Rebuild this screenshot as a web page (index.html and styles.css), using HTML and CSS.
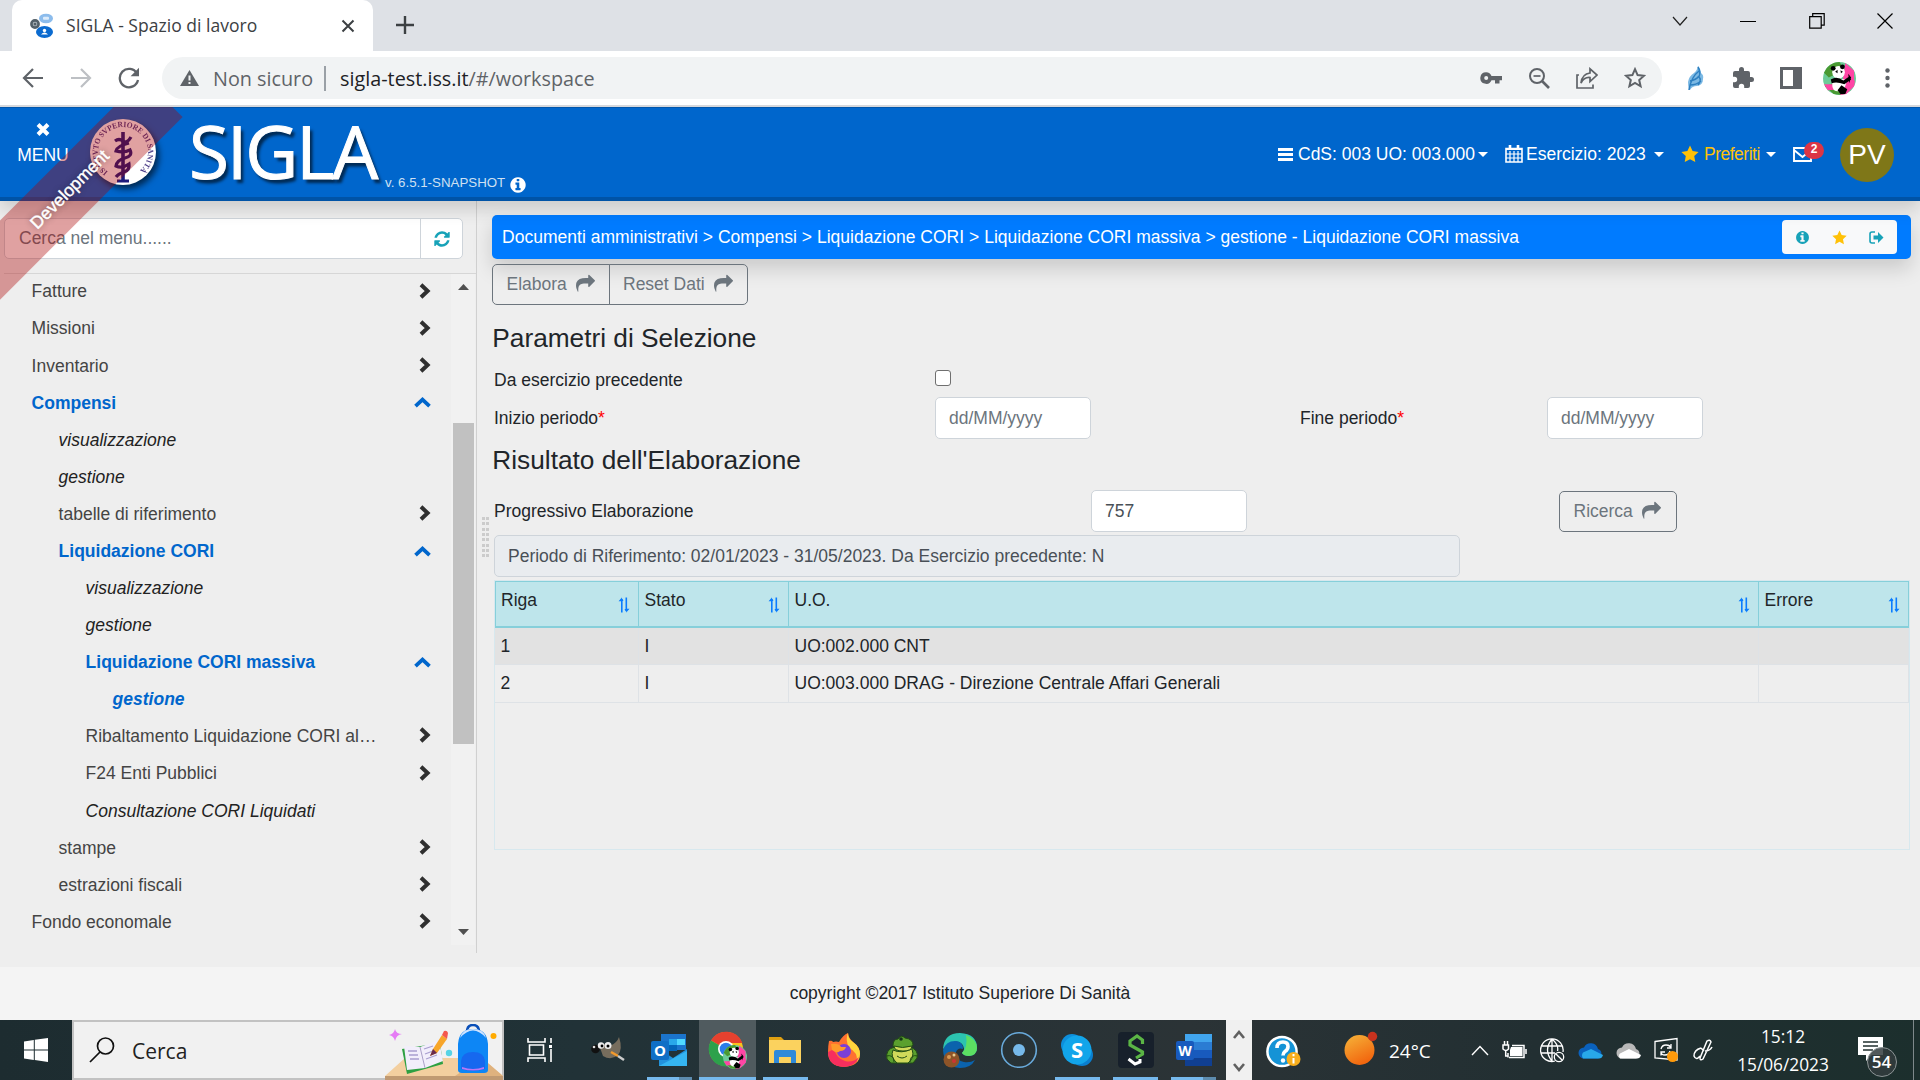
FILE: index.html
```html
<!DOCTYPE html>
<html lang="it">
<head>
<meta charset="utf-8">
<title>SIGLA - Spazio di lavoro</title>
<link rel="stylesheet" href="styles.css">
</head>
<body>
<svg width="0" height="0" class="sprite">
  <symbol id="share" viewBox="0 0 1792 1792"><path fill="currentColor" d="M1792 640q0 26-19 45l-512 512q-19 19-45 19t-45-19-19-45v-256h-224q-98 0-175.5 6t-154 21.5-133 42.5-105.5 69.5-80 101-48.5 138.5-17.5 181q0 55 5 123 0 6 2.5 23.5t2.5 26.5q0 15-8.5 25t-23.5 10q-16 0-28-17-7-9-13-22t-13.5-30-10.5-24q-127-285-127-451 0-199 53-333 162-403 875-403h224v-256q0-26 19-45t45-19 45 19l512 512q19 19 19 45z"/></symbol>
  <symbol id="info" viewBox="0 0 1792 1792"><path fill="currentColor" d="M1152 1376v-160q0-14-9-23t-23-9h-96v-512q0-14-9-23t-23-9h-320q-14 0-23 9t-9 23v160q0 14 9 23t23 9h96v320h-96q-14 0-23 9t-9 23v160q0 14 9 23t23 9h448q14 0 23-9t9-23zm-128-896v-160q0-14-9-23t-23-9h-192q-14 0-23 9t-9 23v160q0 14 9 23t23 9h192q14 0 23-9t9-23zm640 416q0 209-103 385.5t-279.5 279.5-385.5 103-385.5-103-279.5-279.5-103-385.5 103-385.5 279.5-279.5 385.5-103 385.5 103 279.5 279.5 103 385.5z"/></symbol>
  <symbol id="refresh" viewBox="0 0 1792 1792"><path fill="currentColor" d="M1639 1056q0 5-1 7-64 268-268 434.5t-478 166.5q-146 0-282.5-55t-243.5-157l-129 129q-19 19-45 19t-45-19-19-45v-448q0-26 19-45t45-19h448q26 0 45 19t19 45-19 45l-137 137q71 66 161 102t187 36q134 0 250-65t186-179q11-17 53-117 8-23 30-23h192q13 0 22.5 9.5t9.5 22.5zm25-800v448q0 26-19 45t-45 19h-448q-26 0-45-19t-19-45 19-45l138-138q-148-137-349-137-134 0-250 65t-186 179q-11 17-53 117-8 23-30 23h-199q-13 0-22.5-9.5t-9.5-22.5v-7q65-268 270-434.5t480-166.5q146 0 284 55.5t245 156.5l130-129q19-19 45-19t45 19 19 45z"/></symbol>
  <symbol id="star" viewBox="0 0 18 18"><path fill="currentColor" d="M9 .6l2.6 5.5 6 .8-4.4 4.2 1.1 6L9 14.200l-5.300 2.900 1.100-6L.4 6.900l6-.8z"/></symbol>
  <symbol id="right" viewBox="0 0 12 16"><path d="M2 1.800L8.600 8 2 14.200" fill="none" stroke="currentColor" stroke-width="4"/></symbol>
  <symbol id="up" viewBox="0 0 17 11"><path d="M1.500 9.200L8.500 2.700l7 6.500" fill="none" stroke="currentColor" stroke-width="3.800"/></symbol>
  <symbol id="sort" viewBox="0 0 12 16"><path d="M3.800 15.500V2M8.300 .5V14" fill="none" stroke="currentColor" stroke-width="1.600"/><path d="M.6 4.200L3.800.6v3.600zM11.500 11.800l-3.200 3.600v-3.600z" fill="currentColor"/><path d="M3.500 .5l2 3.500H3.500zM8.500 15.500l-2-3.500h2z" fill="currentColor"/></symbol>
  <symbol id="panda" viewBox="0 0 34 34"><circle cx="17" cy="17" r="17" fill="#6ccb98"/><path d="M17 0a17 17 0 0 0-16 11l5 5 16-8zM2 25l9-3 8 12-8-1z" fill="#4a9a32"/><path d="M23 1l9 8v16l-8 8-6 1z" fill="#ff45a5"/><path d="M1 23l9 0 7 5-12 1zM25 21l8-2-1 6-7 3z" fill="#ff45a5"/><path d="M10 17q-2 11 3 13l8 1 4-13z" fill="#fff"/><circle cx="16" cy="10.500" r="6.500" fill="#fff"/><circle cx="10.500" cy="6.500" r="2.500"/><circle cx="20" cy="5" r="2.500"/><path d="M12.500 10l2.500-2v3.500zM18 8.500l2.500 1.500-2 1.500z"/><path d="M8 18q6-4 13 1l6-4 2 3-7 5q-8-3-13-1zM15 29l4-5 6 4-2 5-5 0zM26 12l3 4-2 6z"/></symbol>
</svg>

<div class="tabstrip">
  <div class="tab">
    <svg width="26" height="26" viewBox="0 0 26 26"><ellipse cx="17" cy="5.500" rx="7" ry="4.800" fill="#8cbcec"/><rect x="14" y="3.800" width="6" height="3" rx="1" fill="#dcebfa"/><circle cx="6" cy="11" r="3.600" fill="#b9c0c5" stroke="#536069" stroke-width="2.600"/><circle cx="6" cy="11" r="1.500" fill="#536069"/><ellipse cx="15.500" cy="19" rx="8.500" ry="6" fill="#0b6bd0"/><circle cx="15.500" cy="17.500" r="1.700" fill="#fff"/><path d="M12 21.500q3.500-4 7 0z" fill="#fff"/></svg>
    <span class="tab-title">SIGLA - Spazio di lavoro</span>
    <svg class="tab-close" width="14" height="14" viewBox="0 0 14 14"><path d="M1.500 1.500l11 11M12.500 1.500l-11 11" stroke="#3c4043" stroke-width="2"/></svg>
  </div>
  <svg class="tab-new" width="18" height="18" viewBox="0 0 18 18"><path d="M9 0v18M0 9h18" stroke="#3c4043" stroke-width="2.400"/></svg>
  <div class="window-controls">
    <svg width="16" height="16" viewBox="0 0 16 16"><path d="M1 4l7 8 7-8" fill="none" stroke="#222" stroke-width="1.200"/></svg>
    <svg width="16" height="16" viewBox="0 0 16 16"><path d="M0 8.500h16" stroke="#000"/></svg>
    <svg width="16" height="16" viewBox="0 0 16 16"><path d="M.7 3.700h11.500v11.500H.7zM3.700 3.500V.7h11.500v11.500h-2.800" fill="none" stroke="#000" stroke-width="1.200"/></svg>
    <svg width="16" height="16" viewBox="0 0 16 16"><path d="M.5.500l15 15M15.500.500l-15 15" stroke="#000" stroke-width="1.200"/></svg>
  </div>
</div>

<div class="toolbar">
  <div class="nav-icons">
    <svg width="22" height="22" viewBox="0 0 22 22"><path d="M21 11H3M11 2l-9 9 9 9" fill="none" stroke="#5f6368" stroke-width="2.200"/></svg>
    <svg width="22" height="22" viewBox="0 0 22 22"><path d="M1 11h18M11 2l9 9-9 9" fill="none" stroke="#bdc0c4" stroke-width="2.200"/></svg>
    <svg width="22" height="22" viewBox="0 0 22 22"><path d="M19 6.500A9.200 9.200 0 1 0 20 13" fill="none" stroke="#5f6368" stroke-width="2.300"/><path d="M21 .8v8.400h-8.400z" fill="#5f6368"/></svg>
  </div>
  <div class="omnibox">
    <svg width="19" height="16" viewBox="0 0 19 16"><path d="M9.500 0L19 16H0z" fill="#5f6368"/><path d="M9.500 5.500v5M9.500 12v2" stroke="#f1f3f4" stroke-width="2"/></svg>
    <span class="insecure">Non sicuro</span>
    <span class="url"><b>sigla-test.iss.it</b>/#/workspace</span>
    <div class="omni-icons">
      <svg width="22" height="22" viewBox="0 0 22 22"><path d="M6.200 5.200a5.800 5.800 0 1 0 5.300 8H15v3.300h4.500v-3.300H22V9H11.500a5.800 5.800 0 0 0-5.300-3.800zm0 3.800a2 2 0 1 1 0 4 2 2 0 0 1 0-4z" fill="#5f6368"/></svg>
      <svg width="22" height="22" viewBox="0 0 22 22"><circle cx="9" cy="9" r="7" fill="none" stroke="#5f6368" stroke-width="2"/><path d="M14 14l7 7" stroke="#5f6368" stroke-width="2.600"/><path d="M5.500 9h7" stroke="#5f6368" stroke-width="1.700"/></svg>
      <svg width="22" height="22" viewBox="0 0 22 22"><path d="M3 8H1v13h16v-3.500M14 6V1.800L21 8l-7 6.500v-4q-6-.5-9 5.500 1-9 9-10z" fill="none" stroke="#5f6368" stroke-width="1.700"/></svg>
      <svg width="22" height="22" viewBox="0 0 22 22"><path d="M11 2.200l2.600 5.900 6.400.6-4.800 4.300 1.400 6.300L11 16l-5.600 3.300 1.400-6.300L2 8.700l6.400-.6z" fill="none" stroke="#5f6368" stroke-width="2"/></svg>
    </div>
  </div>
  <div class="ext-icons">
    <span><svg width="26" height="26" viewBox="0 0 26 26"><path d="M7 25q-1-4-1-8 1-6 6-9 3-2 4-7 3 3 3 7 3 2 2 6 0 6-6 7-5 0-7 4z" fill="#7cb9e4"/><path d="M7 25q2-13 10-19M8 16q6-1 9-5M8 20q6 0 11-4M16 2q3 5 1 10 3 3-1 8" fill="none" stroke="#2d7fc0" stroke-width="1.500"/></svg></span>
    <span><svg width="24" height="24" viewBox="0 0 24 24"><path d="M20.500 11H19V7a2 2 0 0 0-2-2h-4V3.500a2.500 2.500 0 0 0-5 0V5H4a2 2 0 0 0-2 2v3.800h1.500a2.700 2.700 0 0 1 0 5.400H2V20a2 2 0 0 0 2 2h3.800v-1.500a2.700 2.700 0 0 1 5.400 0V22H17a2 2 0 0 0 2-2v-4h1.500a2.500 2.500 0 0 0 0-5z" fill="#5f6368"/></svg></span>
    <span><svg width="22" height="22" viewBox="0 0 22 22"><path d="M0 0h22v22H0zM3 3v16h10V3z" fill="#5f6368" fill-rule="evenodd"/></svg></span>
    <span><svg width="33" height="33"><use href="#panda"/></svg></span>
    <span><svg width="5" height="20" viewBox="0 0 5 20"><g fill="#5f6368"><circle cx="2.500" cy="2.500" r="2.200"/><circle cx="2.500" cy="10" r="2.200"/><circle cx="2.500" cy="17.500" r="2.200"/></g></svg></span>
  </div>
</div>

<div class="page">
  <header class="app-header">
    <div class="menu-toggle">
      <svg width="14" height="13" viewBox="0 0 14 13"><path d="M2 1.500l10 10M12 1.500l-10 10" stroke="#fff" stroke-width="4"/></svg>
      <span>MENU</span>
    </div>
    <svg class="logo" width="66" height="66" viewBox="0 0 66 66">
      <circle cx="33" cy="33" r="33" fill="#fff"/>
      <path id="ring" d="M18 53A25 25 0 1 1 50 51.300" fill="none"/>
      <text class="ring-text"><textPath href="#ring" textLength="122" lengthAdjust="spacingAndGlyphs">ISTITVTO SVPERIORE DI SANITÀ</textPath></text>
      <path d="M33 13v50" stroke="#1d1a7c" stroke-width="3.600"/>
      <path d="M25 22q4-3 8 0t8-4M39 24q-12 3-13 8 8 2 14-1 3 6-5 8t-9 8q6 3 13-2 1 6-5 8t-8 5M27 62h12" fill="none" stroke="#1d1a7c" stroke-width="3.200"/>
    </svg>
    <span class="brand">SIGLA</span>
    <span class="version">v. 6.5.1-SNAPSHOT</span>
    <svg class="version-info" width="18" height="18"><use href="#info"/></svg>
    <div class="header-nav">
      <svg width="15" height="13" viewBox="0 0 15 13"><path d="M0 1.500h15M0 6.500h15M0 11.500h15" stroke="#fff" stroke-width="3"/></svg>
      <span class="nav-text nav-cds">CdS: 003 UO: 003.000</span><i class="caret"></i>
      <svg class="cal" width="18" height="18" viewBox="0 0 18 18"><path d="M1 3.500h16V17H1z" fill="none" stroke="#fff" stroke-width="1.600"/><path d="M1 4.500h16M1 9h16M1 13h16M5 6v11M9 6v11M13 6v11" stroke="#fff" stroke-width="1.200"/><path d="M5 0v4M13 0v4" stroke="#fff" stroke-width="2.600"/></svg>
      <span class="nav-text nav-year">Esercizio: 2023</span><i class="caret"></i>
      <svg class="nav-star" width="18" height="18"><use href="#star"/></svg>
      <span class="nav-text nav-fav">Preferiti</span><i class="caret"></i>
      <div class="mail">
        <svg width="19" height="15" viewBox="0 0 19 15"><path d="M1 1h17v13H1zM1 3l8.500 7L18 3" fill="none" stroke="#fff" stroke-width="1.900"/></svg>
        <span class="badge">2</span>
      </div>
      <span class="avatar">PV</span>
    </div>
  </header>

  <div class="app-body">
    <aside class="sidebar">
      <div class="search">
        <span class="search-input">Cerca nel menu......</span>
        <span class="search-btn"><svg width="18" height="18"><use href="#refresh"/></svg></span>
      </div>
      <div class="menu-wrap">
        <ul class="menu">
          <li>Fatture<svg class="r"><use href="#right"/></svg></li>
          <li>Missioni<svg class="r"><use href="#right"/></svg></li>
          <li>Inventario<svg class="r"><use href="#right"/></svg></li>
          <li class="open">Compensi<svg class="u"><use href="#up"/></svg></li>
          <li class="l2 leaf">visualizzazione</li>
          <li class="l2 leaf">gestione</li>
          <li class="l2">tabelle di riferimento<svg class="r"><use href="#right"/></svg></li>
          <li class="l2 open">Liquidazione CORI<svg class="u"><use href="#up"/></svg></li>
          <li class="l3 leaf">visualizzazione</li>
          <li class="l3 leaf">gestione</li>
          <li class="l3 open">Liquidazione CORI massiva<svg class="u"><use href="#up"/></svg></li>
          <li class="l4 leaf open">gestione</li>
          <li class="l3">Ribaltamento Liquidazione CORI al…<svg class="r"><use href="#right"/></svg></li>
          <li class="l3">F24 Enti Pubblici<svg class="r"><use href="#right"/></svg></li>
          <li class="l3 leaf">Consultazione CORI Liquidati</li>
          <li class="l2">stampe<svg class="r"><use href="#right"/></svg></li>
          <li class="l2">estrazioni fiscali<svg class="r"><use href="#right"/></svg></li>
          <li>Fondo economale<svg class="r"><use href="#right"/></svg></li>
        </ul>
        <div class="scrollbar">
          <svg width="11" height="6" viewBox="0 0 11 6"><path d="M0 6L5.500 0 11 6z" fill="#505050"/></svg>
          <div class="thumb"></div>
          <svg width="11" height="6" viewBox="0 0 11 6"><path d="M0 0l5.500 6L11 0z" fill="#505050"/></svg>
        </div>
      </div>
    </aside>
    <div class="splitter"><span class="grip"></span></div>
    <main class="content">
      <div class="breadcrumb">
        <span>Documenti amministrativi &gt; Compensi &gt; Liquidazione CORI &gt; Liquidazione CORI massiva &gt; gestione - Liquidazione CORI massiva</span>
        <div class="crumb-tools">
          <svg class="teal" width="15" height="15"><use href="#info"/></svg>
          <svg class="gold" width="15" height="15"><use href="#star"/></svg>
          <svg class="teal" width="15" height="13" viewBox="0 0 15 13"><path d="M6 1H3a2 2 0 0 0-2 2v7a2 2 0 0 0 2 2h3" fill="none" stroke="currentColor" stroke-width="1.600"/><path d="M4.500 4.500h4.500V1l5.500 5.500L9 12V8.500H4.500z" fill="currentColor"/></svg>
        </div>
      </div>
      <div class="btn-group">
        <span class="btn">Elabora<svg><use href="#share"/></svg></span><span class="btn">Reset Dati<svg><use href="#share"/></svg></span>
      </div>
      <h4 class="h-params">Parametri di Selezione</h4>
      <div class="row row-check"><span class="lbl">Da esercizio precedente</span><span class="checkbox"></span></div>
      <div class="row"><span class="lbl">Inizio periodo<em>*</em></span><span class="input ph">dd/MM/yyyy</span><span class="lbl-end">Fine periodo<em>*</em></span><span class="input ph">dd/MM/yyyy</span></div>
      <h4 class="h-result">Risultato dell'Elaborazione</h4>
      <div class="row row-prog"><span class="lbl-prog">Progressivo Elaborazione</span><span class="input">757</span><span class="btn btn-search">Ricerca<svg><use href="#share"/></svg></span></div>
      <div class="period">Periodo di Riferimento: 02/01/2023 - 31/05/2023. Da Esercizio precedente: N</div>
      <div class="table-box">
        <table>
          <colgroup><col class="c1"><col class="c2"><col class="c3"><col class="c4"></colgroup>
          <thead><tr>
            <th><div>Riga<svg><use href="#sort"/></svg></div></th>
            <th><div>Stato<svg><use href="#sort"/></svg></div></th>
            <th><div>U.O.<svg><use href="#sort"/></svg></div></th>
            <th><div>Errore<svg><use href="#sort"/></svg></div></th>
          </tr></thead>
          <tbody>
            <tr class="odd"><td>1</td><td>I</td><td>UO:002.000 CNT</td><td></td></tr>
            <tr><td>2</td><td>I</td><td>UO:003.000 DRAG - Direzione Centrale Affari Generali</td><td></td></tr>
          </tbody>
        </table>
      </div>
    </main>
  </div>
  <footer class="app-footer">copyright ©2017 Istituto Superiore Di Sanità</footer>
  <div class="ribbon">Development</div>
</div>

<div class="taskbar">
  <div class="start"><svg width="24" height="24" viewBox="0 0 24 24"><path d="M0 3.400L9.800 2v9.400H0zM10.800 1.800L24 0v11.400H10.800zM0 12.500h9.800V22L0 20.600zM10.800 12.500H24V24l-13.200-1.900z" fill="#fff"/></svg></div>
  <div class="task-search">
    <svg width="26" height="26" viewBox="0 0 26 26"><circle cx="16.500" cy="9" r="8" fill="none" stroke="#111" stroke-width="1.700"/><path d="M11 15L1 25" stroke="#111" stroke-width="1.700"/></svg>
    <span>Cerca</span>
    <svg class="school" width="118" height="56" viewBox="0 0 118 56">
      <path d="M0 52L20 34h77l21 18z" fill="#f3cf9f"/><path d="M97 34l21 18H70z" fill="#dfb27e"/><path d="M0 52h118v4H0z" fill="#c09a72"/>
      <path d="M10 5q1 5 7 5-6 1-7 7-1-5-6-6 5-1 6-6z" fill="#e57bf5"/>
      <path d="M17 25l38-6 3 21-36 10z" fill="#2ea043"/><path d="M19 22l16 1 19-7 4 21-18 7-18 2z" fill="#f2eefb"/><path d="M35 23l5 21" stroke="#aaa0c8"/><path d="M23 27l9 0M24 31l9 0M25 35l9 0M39 25l9-3M40 30l8-3M41 35l11-4" stroke="#a99fd0" stroke-width="1.300"/>
      <path d="M45 32l3-7 9-14 5 4-10 14z" fill="#f7a52a"/><path d="M57 11l2-4q3-1 4 2l-1 6z" fill="#f4574d"/><path d="M45 32l3-7 4 4z" fill="#6b2a4e"/>
      <circle cx="64" cy="29" r="3.200" fill="#57d3e6"/><circle cx="108.500" cy="12" r="3" fill="#ffab00"/>
      <path d="M82 8q0-7 6-7t6 7" fill="none" stroke="#0a4fb8" stroke-width="2.500"/><path d="M73 20q1-15 15-15t15 15v26q0 3-4 3H77q-4 0-4-3z" fill="#0d86f5"/><path d="M75 14q13-15 26 0-2-9-13-9t-13 9z" fill="#cfe3ff"/><path d="M76 37q1-9 12-9t12 9v8q-12 4-24 0z" fill="#1668ef"/><path d="M77 43q11 4 22 0v2q-11 3-22 0z" fill="#b876f5"/>
    </svg>
  </div>
  <div class="apps">
    <div class="app w75"><svg width="26" height="26" viewBox="0 0 26 26"><path d="M1 1v4h17V1M1 25v-4h17v4M2.500 8h14v10H2.500zM24 1v5M24 12v13" fill="none" stroke="#fff" stroke-width="1.600"/><path d="M22 8h3v3h-3z" fill="#fff"/></svg></div>
    <div class="app w60"><svg width="36" height="28" viewBox="0 0 36 28"><path d="M8 9q4-3 11 1 7-3 9-9 4 12-1 18-7 6-15 1z" fill="#776d5d"/><circle cx="4.500" cy="13" r="4.300" fill="#111"/><circle cx="3" cy="11" r="1.300" fill="#ddd"/><circle cx="10" cy="9.500" r="3.200" fill="#eee"/><circle cx="17" cy="9.500" r="3.500" fill="#eee"/><circle cx="11" cy="10" r="1.400"/><circle cx="17" cy="10" r="1.500"/><path d="M20 16l7 4" stroke="#f39a2c" stroke-width="2.500"/><path d="M27 20l6 4" stroke="#ccc" stroke-width="2.500"/></svg></div>
    <div class="app w60 split"><svg width="36" height="34" viewBox="0 0 36 34"><path d="M10 1h25v16H10z" fill="#1b74cc"/><path d="M18 6h8v6h-8z" fill="#28a8ea"/><path d="M26 6h8v6h-8z" fill="#50d9ff"/><path d="M18 12h8v6h-8z" fill="#0364b8"/><path d="M8 16l14 9 14-9v17H8z" fill="#2292dc"/><path d="M8 33l28-15v15z" fill="#35b5f1"/><rect y="8" width="18" height="19" rx="2" fill="#0f6fc6"/><text x="9" y="23" class="tile">O</text></svg></div>
    <div class="app w57 active"><svg width="40" height="40" viewBox="0 0 40 40"><circle cx="18" cy="19" r="17" fill="#fbc11b"/><path d="M18 19L3 10.500A17.500 17.500 0 0 1 34.500 13H18z" fill="#e6412f"/><path d="M18 19L3 10.500A17.500 17.500 0 0 0 19 36.500z" fill="#2da14b"/><circle cx="18" cy="19" r="8" fill="#fff"/><circle cx="18" cy="19" r="6.300" fill="#2b7de9"/><svg x="15" y="15" width="24" height="24"><use href="#panda"/></svg></svg></div>
    <div class="app on"><svg width="34" height="28" viewBox="0 0 34 28"><path d="M1 1h12l3 3H1z" fill="#e0a011"/><path d="M1 4h32v23H1z" fill="#fbd25e"/><path d="M6 27V16q0-2 2-2h18q2 0 2 2v11h-5v-6H11v6z" fill="#2f8ad8"/></svg></div>
    <div class="app"><svg width="36" height="36" viewBox="0 0 36 36"><path d="M3 9q3-1 4 1 3-1 6 0 4-7 9-9 1 6 5 9 7 5 7 12 0 12-16 13-16-1-16-15 0-6 1-11z" fill="#ff7130"/><path d="M22 1q0 6 5 9 7 5 7 12 0 4-3 8 1-10-8-14-4-9-1-15z" fill="#ffd43c"/><path d="M2 20q0 14 16 15 12-1 15-10-6 6-14 4-9-3-11-12z" fill="#f72e5e"/><circle cx="18" cy="19" r="7" fill="#7b3fd6"/><path d="M5 12q8-1 10 3l5 0q-1 4-6 4-3 3-8-1z" fill="#ff9a2a"/></svg></div>
    <div class="app"><svg width="34" height="30" viewBox="0 0 34 30"><g stroke="#234d15" stroke-width="1"><path d="M2 24q-2-10 8-12l14 0q10 2 8 11l-4 5h-6l-10 0-6 0z" fill="#5ba02e"/><path d="M8 15q8 4 19-1 3 9-4 14H12q-7-6-4-13z" fill="#d0d95a"/><path d="M8 11q0-7 5-7 3-5 7-1 8 1 8 7-2 4-8 5-9 1-12-4z" fill="#5ba02e"/><path d="M9 11q8 3 18 0 0 5-9 5t-9-5z" fill="#d0d95a"/><path d="M1 21q8-2 8 6M33 21q-8-2-8 6M12 21q5 4 10 0" fill="none"/></g><circle cx="16" cy="4" r="1.800" fill="#16351a"/></svg></div>
    <div class="app"><svg width="36" height="36" viewBox="0 0 36 36"><path d="M1 17Q2 1 18 1q17 1 17 15 0 7-8 8-5 0-7-3 4-4 0-9-6-7-19 5z" fill="#2cc3b0"/><path d="M24 3q11 4 11 13 0 7-8 8-5 0-7-3 6-6 4-18z" fill="#5cdf62"/><path d="M1 18q3-9 12-9 8 0 8 8-5-2-7 3-1 8 8 10 6 1 11-2-4 8-15 8Q2 35 1 18z" fill="#0b63ad"/><circle cx="9.500" cy="27.500" r="8" fill="#8d5428"/><circle cx="7" cy="25" r="2" fill="#d79a55"/><circle cx="12" cy="29" r="2" fill="#c33"/><circle cx="12" cy="23" r="1.500" fill="#e8c98c"/></svg></div>
    <div class="app"><svg width="38" height="38" viewBox="0 0 38 38"><circle cx="19" cy="19" r="17.300" fill="none" stroke="#69aadb" stroke-width="1.600"/><circle cx="19" cy="19" r="6" fill="#76b9ea"/></svg></div>
    <div class="app on"><svg width="34" height="34" viewBox="0 0 34 34"><circle cx="12" cy="12" r="11" fill="#0d8fdc"/><circle cx="22" cy="22" r="11" fill="#0a7fd0"/><circle cx="17" cy="17" r="14.500" fill="#12a5ea"/><text x="17" y="25" class="tile skype">S</text></svg></div>
    <div class="app on"><svg width="36" height="36" viewBox="0 0 36 36"><rect width="36" height="36" rx="4" fill="#17202b"/><path d="M24.500 12V8L19 4l-7 5v4l12.500 7v2L18 26" fill="none" stroke="#5bb545" stroke-width="3.200"/><path d="M10.500 27l6.500 5 5-2v-3" fill="none" stroke="#fff" stroke-width="3"/></svg></div>
    <div class="app split"><svg width="36" height="34" viewBox="0 0 36 34"><path d="M9 1h27v8H9z" fill="#41a5ee"/><path d="M9 9h27v8H9z" fill="#2b7cd3"/><path d="M9 17h27v8H9z" fill="#185abd"/><path d="M9 25h27v8H9z" fill="#103f91"/><rect y="8" width="18" height="19" rx="2" fill="#185abd"/><text x="9" y="23" class="tile word">W</text></svg></div>
  </div>
  <div class="task-scroll">
    <svg width="12" height="9" viewBox="0 0 12 9"><path d="M1 8l5-6 5 6" fill="none" stroke="#606060" stroke-width="2.600"/></svg>
    <svg width="12" height="9" viewBox="0 0 12 9"><path d="M1 1l5 6 5-6" fill="none" stroke="#606060" stroke-width="2.600"/></svg>
  </div>
  <div class="tray">
    <div class="cell t-help"><svg width="36" height="34" viewBox="0 0 36 34"><circle cx="16" cy="16.500" r="14.600" fill="#1593d6" stroke="#fff" stroke-width="2.500"/><path d="M11 13q0-6 6-6 5 0 5 4.500 0 3-3 5-2 1.500-2 4" fill="none" stroke="#fff" stroke-width="3.600"/><circle cx="17" cy="25.500" r="2.200" fill="#fff"/><circle cx="27.500" cy="24" r="7" fill="#f8ae1c"/><path d="M27.500 23v5.500M27.500 19v2.200" stroke="#fff" stroke-width="2"/></svg></div>
    <div class="cell t-weather"><svg width="34" height="36" viewBox="0 0 34 36"><defs><linearGradient id="sun" x2=".5" y2="1"><stop stop-color="#f6b53a"/><stop offset="1" stop-color="#f2670f"/></linearGradient></defs><circle cx="15.500" cy="20" r="15" fill="url(#sun)"/><circle cx="28.500" cy="6.500" r="4.700" fill="#c8321e"/></svg><span>24°C</span></div>
    <div class="cell t-icons">
      <svg width="18" height="11" viewBox="0 0 18 11"><path d="M1 10l8-8.500L17 10" fill="none" stroke="#fff" stroke-width="1.400"/></svg>
      <svg width="25" height="18" viewBox="0 0 25 18"><path d="M6 16.500V12M7 16.500h15v-12H10M24 8v5M1 4h5.500v4Q4 11 1 8zM2.500 4V0M5.500 4V0M3.700 10v5h3" fill="none" stroke="#fff" stroke-width="1.500"/><path d="M9 6h11.500v9H8V9z" fill="#fff"/></svg>
      <svg width="25" height="25" viewBox="0 0 25 25"><g fill="none" stroke="#fff" stroke-width="1.300"><path d="M15 23A11.300 11.300 0 1 1 23 14M12 1q-9 11 0 22M12 1q7 6 5.500 12M12 1v22M2 8h20M1 15h14"/><circle cx="19" cy="19" r="4.700"/><path d="M15.700 15.700l6.600 6.600"/></g></svg>
      <svg width="25" height="17" viewBox="0 0 25 17"><path d="M6 16.500a5.500 5.500 0 0 1 0-11 7.500 7.500 0 0 1 14 1.500 5 5 0 0 1 0 9.500z" fill="#0a61bd"/><path d="M5 16.500q-2-3 0-6l8-3.500 12 6q-1 3.500-4 3.500z" fill="#28a8ea"/></svg>
      <svg width="25" height="17" viewBox="0 0 25 17"><path d="M6 16.500a5.500 5.500 0 0 1 0-11 7.500 7.500 0 0 1 14 1.500 5 5 0 0 1 0 9.500z" fill="#b9b9b9"/><path d="M4 16.500q-2-3 0-5l9-4.500 12 6q-1 3.500-4 3.500z" fill="#fff"/></svg>
      <svg width="25" height="26" viewBox="0 0 25 26"><path d="M1 4.500L23 1.500V23L1 21z" fill="none" stroke="#fff" stroke-width="1.300"/><path d="M7 12q1-4 5-4t5 3M17 7v4h-4M16 14q-1 4-5 4t-4-3M7 18.500V15h4" fill="none" stroke="#fff" stroke-width="1.300"/><circle cx="18.500" cy="19.500" r="5.500" fill="#ff9a0a"/></svg>
      <svg width="22" height="22" viewBox="0 0 22 22"><path d="M8 19L15 2q3-2 4 1L11 20q-3 2-3-1zM9 9q-7 2-7 8 2 5 6 0M13 12q5 0 7-4M9 9l3 3" fill="none" stroke="#fff" stroke-width="1.500"/></svg>
    </div>
    <div class="cell t-clock"><span>15:12</span><span>15/06/2023</span></div>
    <div class="cell t-notif"><svg width="25" height="24" viewBox="0 0 25 24"><path d="M0 0h25v18H14l-6 6v-6H0z" fill="#fff"/><path d="M5 5h15M5 9h15M5 13h10" stroke="#22302f" stroke-width="1.400"/></svg><span class="count">54</span></div>
  </div>
</div>
</body>
</html>
```
FILE: styles.css
```css
* { box-sizing: border-box; }
body {
  margin: 0; width: 1920px; height: 1080px; overflow: hidden;
  display: flex; flex-direction: column;
  font-family: "Liberation Sans", Arial, sans-serif; font-size: 17.5px; line-height: 1.5; color: #212529;
}
svg { flex: none; display: block; }
.sprite { position: absolute; }

/* browser chrome */
.tabstrip { height: 51px; background: #dee1e6; display: flex; align-items: flex-end; padding-left: 12px; font-family: "Open Sans", sans-serif; flex: none; }
.tab { width: 361px; height: 51px; background: #fff; border-radius: 10px 10px 0 0; display: flex; align-items: center; padding: 0 18px 0 17px; }
.tab-title { font-size: 17.5px; margin-left: 11px; color: #3c4043; letter-spacing: 0.03px; }
.tab-close { margin-left: auto; }
.tab-new { margin: 0 0 17px 23px; }
.window-controls { margin-left: auto; display: flex; gap: 52.500px; align-self: flex-start; padding: 13px 27px 0 0; }
.toolbar { height: 56px; background: #fff; border-bottom: 2px solid #d6d8dc; display: flex; align-items: center; padding-left: 22px; flex: none; font-family: "Open Sans", sans-serif; }
.nav-icons { display: flex; gap: 26px; width: 140px; }
.omnibox { width: 1500px; height: 42px; border-radius: 21px; background: #f1f3f4; display: flex; align-items: center; padding: 0 16px 0 18px; font-size: 19.800px; color: #5f6368; }
.insecure { margin-left: 14px; padding: 1px 11px 0 0; border-right: 2px solid #9aa0a6; line-height: 24px; }
.url { margin-left: 14px; padding-top: 1px; }
.url b { font-weight: 400; color: #202124; }
.omni-icons { display: flex; gap: 26px; margin-left: auto; }
.ext-icons { display: flex; align-items: center; padding-left: 9px; }
.ext-icons span { width: 48px; display: flex; justify-content: center; }

/* application */
.page { flex: none; height: 913px; display: flex; flex-direction: column; background: #eee; position: relative; overflow: hidden; }
.app-header { height: 94px; flex: none; background: #06c; border-top: 1px solid #0056ac; border-bottom: 4px solid #0053a6; display: flex; align-items: flex-start; position: relative; box-shadow: 0 8px 16px rgba(0,0,0,.15); }
.menu-toggle { width: 52px; margin-left: 17px; padding-top: 15px; display: flex; flex-direction: column; align-items: center; color: #fff; font-size: 17.5px; line-height: 26px; gap: 6px; }
.logo { margin: 11px 0 0 21px; overflow: visible; filter: drop-shadow(3px 4px 3px rgba(0,0,0,.6)); }
.ring-text { font: 700 8px "Liberation Serif", serif; fill: #4a3b86; }
.brand { margin: 1px 0 0 33px; width: 191px; font: 400 73px/84px "Open Sans", sans-serif; letter-spacing: -2.100px; color: #fff; -webkit-text-stroke: 1px #fff; text-shadow: 3px 4px 3px rgba(0,0,0,.6); white-space: nowrap; }
.version { margin: 65px 0 0 5px; width: 125px; font-size: 13.300px; line-height: 20px; color: #cfe0f2; white-space: nowrap; }
.version-info { margin: 68px 0 0 -1px; color: #fff; }
.header-nav { margin-left: auto; height: 92px; display: flex; align-items: center; color: #fff; padding-right: 26px; }
.nav-text { white-space: nowrap; margin-left: 5px; letter-spacing: -.1px; }
.nav-cds { width: 178px; letter-spacing: 0; }
.nav-year { width: 120px; margin-left: 3px; letter-spacing: 0; }
.nav-fav { width: 60px; letter-spacing: -.5px; color: #ffc107; }
.caret { border: 5px solid transparent; border-top: 5px solid #fff; border-bottom: 0; margin-left: 2px; }
.nav-year + .caret { margin-left: 8px; }
.cal { margin-left: 17px; }
.nav-star { margin-left: 17px; color: #ffc107; }
.mail { margin-left: 17px; position: relative; margin-right: 28px; }
.badge { position: absolute; left: 11px; top: -5px; width: 20px; height: 17px; border-radius: 9px; background: #dc3545; font-size: 12px; font-weight: 700; line-height: 15px; text-align: center; }
.avatar { width: 54px; height: 54px; border-radius: 50%; background: #7f7718; font-size: 28px; text-align: center; line-height: 54px; margin-top: 2px; }
.app-body { flex: 1; display: flex; min-height: 0; }

/* sidebar */
.sidebar { width: 477px; height: 752px; border-right: 1px solid #d0d0d0; padding: 17px 0 0 4px; }
.search { display: flex; width: 459px; height: 41px; border: 1px solid #ced4da; border-radius: 5px; background: #fff; align-items: stretch; line-height: 38px; }
.search-input { flex: 1; padding-left: 14px; color: #6c757d; }
.search-btn { width: 42px; border-left: 1px solid #ced4da; display: flex; align-items: center; justify-content: center; color: #17a2b8; }
.menu-wrap { display: flex; margin-top: 14px; border-top: 1px solid #d6d6d6; height: 672px; }
.menu { list-style: none; margin: -1px 0 0; padding: 0; width: 447px; color: #333; }
.menu li { height: 37.080px; display: flex; align-items: center; justify-content: space-between; padding: 0 20px 0 27.600px; color: #444; }
.menu .leaf { font-style: italic; color: #222; }
.menu .open { color: #06c; font-weight: 700; }
.menu .l2 { padding-left: 54.600px; }
.menu .l3 { padding-left: 81.600px; }
.menu .l4 { padding-left: 108.600px; }
.r { width: 12px; height: 16px; margin-top: -2px; color: #2f2f2f; }
.u { width: 17px; height: 11px; }
.scrollbar { width: 24px; background: #f1f1f1; display: flex; flex-direction: column; align-items: center; padding: 10px 0; }
.thumb { width: 21px; height: 321px; margin: 133px 0 185px; background: #c1c1c1; flex: none; }
.splitter { width: 15px; display: flex; align-items: flex-start; padding: 316px 0 0 5px; }
.grip { width: 7px; height: 40px; background: repeating-linear-gradient(#ccc 0 3px, transparent 3px 5.300px); -webkit-mask: linear-gradient(90deg, #000 3px, transparent 3px 4px, #000 4px); mask: linear-gradient(90deg, #000 3px, transparent 3px 4px, #000 4px); }

/* content */
.content { flex: 1; padding: 14px 9px 0 0; }
.breadcrumb { height: 44px; background: #007bff; color: #fff; border-radius: 5px; display: flex; align-items: center; justify-content: space-between; padding: 0 14px 0 10px; box-shadow: 0 10px 20px rgba(0,0,0,.15); letter-spacing: .02px; }
.crumb-tools { width: 115px; height: 34px; border-radius: 4px; background: #f8f9fa; display: flex; align-items: center; justify-content: space-between; padding: 0 13px; }
.teal { color: #17a2b8; }
.gold { color: #ffc107; }
.btn-group { display: flex; margin-top: 5px; }
.btn { height: 41px; border: 1px solid #6c757d; border-radius: 5px; color: #6c757d; display: flex; align-items: center; padding: 0 0 0 13.500px; white-space: nowrap; }
.btn svg { width: 19px; height: 19px; margin: -2px 0 0 9px; }
.btn-group .btn:first-child { border-radius: 5px 0 0 5px; width: 118px; }
.btn-group .btn:last-child { border-radius: 0 5px 5px 0; margin-left: -1px; width: 139px; padding-left: 13px; }
h4 { margin: 0; font-weight: 400; font-size: 26.250px; line-height: 32px; padding-left: .3px; }
.h-params { margin-top: 17px; }
.row { height: 42px; display: flex; align-items: center; padding-left: 2px; }
.row-check { height: 36px; margin-top: 7px; }
.row-check .lbl { padding-top: 3px; }
.row em { color: red; font-style: normal; font-size: 17.5px; }
.lbl { width: 441px; }
.lbl-end { width: 247px; margin-left: 209px; }
.lbl-prog { width: 597px; }
.checkbox { width: 16px; height: 16px; border: 1.500px solid #6f6f6f; border-radius: 3px; background: #fff; margin-top: -3px; }
.input { width: 156px; height: 42px; border: 1px solid #ced4da; border-radius: 5px; background: #fff; padding-left: 13px; line-height: 40px; color: #495057; }
.ph { color: #6c757d; }
.h-result { margin-top: 5px; }
.row-prog { margin-top: 14px; }
.btn-search { margin-left: 312px; width: 118px; }
.period { margin: 3px 0 0 2px; width: 966px; height: 42px; border: 1px solid #ced4da; border-radius: 5px; background: #e9ecef; color: #495057; line-height: 40px; padding-left: 13px; }
.table-box { margin: 3px 0 0 2px; width: 1416px; height: 270px; border: 1px solid #d7e8ee; }
table { border-collapse: separate; border-spacing: 0; width: 1414px; table-layout: fixed; }
.c1 { width: 144px; }
.c2 { width: 150px; }
.c4 { width: 150px; }
th { height: 47px; padding: 0; background: #bee5eb; border: solid #86cfda; border-width: 1px 1px 2px 0; font-weight: 400; text-align: left; }
th:first-child { border-left-width: 1px; }
th div { display: flex; justify-content: space-between; align-items: center; padding: 0 8.500px 7px 5.500px; }
th:first-child div { padding-left: 5px; }
th svg { width: 12px; height: 16px; margin-top: 8px; color: #0a7cff; }
td { height: 37px; padding: 0 5.500px; border: solid #dee2e6; border-width: 0 1px 1px 0; line-height: 26px; }
tr + tr td { height: 38px; padding-bottom: 1px; }
.odd td { background: #e2e2e2; }
.app-footer { height: 53px; flex: none; background: #f4f4f4; text-align: center; line-height: 52px; }
.ribbon { position: absolute; left: -61px; top: 55px; width: 262px; height: 55.500px; background: rgba(170,0,0,.37); color: #fff; text-align: center; line-height: 55px; transform: rotate(-45deg); -webkit-text-stroke: .4px #fff; text-shadow: 0 0 6px rgba(0,0,0,.45); }

/* taskbar */
.taskbar { height: 60px; flex: none; background: linear-gradient(90deg, #1d2c30, #213237 30%, #2b3336 62%, #222f32 80%, #1c2f2d); display: flex; font-family: "Open Sans", sans-serif; color: #fff; }
.start { width: 72px; display: flex; align-items: center; justify-content: center; }
.task-search { width: 432px; background: #f1f1f1; border: 2px solid #c2c2c2; display: flex; align-items: center; padding-left: 15px; color: #222; font-size: 21px; }
.task-search span { margin: 4px 0 0 17px; }
.school { margin: 2px -1px -2px auto; }
.apps { display: flex; width: 722px; }
.app { width: 58.400px; display: flex; align-items: center; justify-content: center; border: solid transparent; border-width: 3px 6px; }
.w75 { width: 75px; border-right-width: 9px; }
.w60 { width: 60px; }
.w57 { width: 57px; border-left-width: 0; border-right-width: 0; }
.on { background: linear-gradient(#76b9ed, #76b9ed) bottom / 45px 3px no-repeat border-box; }
.active { background: linear-gradient(#76b9ed, #76b9ed) bottom / 100% 3px no-repeat border-box, #505b5f border-box; }
.split { background: linear-gradient(90deg, #76b9ed 32px, #5d8cae 32px) bottom / 45px 3px no-repeat border-box; }
.tile { font: 700 15px "Open Sans", sans-serif; fill: #fff; text-anchor: middle; }
.skype { font-size: 22px; }
.word { font-size: 14px; }
.task-scroll { width: 26px; background: #f0f0f0; display: flex; flex-direction: column; align-items: center; justify-content: space-between; padding: 10px 0 8px; }
.tray { flex: 1; display: flex; align-items: center; }
.cell { display: flex; align-items: center; height: 60px; }
.t-help { width: 92px; padding: 3px 0 0 14px; }
.t-weather { width: 127px; font-size: 19px; gap: 11px; padding-top: 2px; }
.t-weather svg { margin-top: -6px; }
.t-icons { width: 243px; justify-content: space-between; }
.t-clock { width: 114px; margin-left: 12px; flex-direction: column; font-size: 17.300px; line-height: 28px; padding-top: 3px; }
.t-notif { margin-left: 17.500px; position: relative; width: 56px; border-right: 1px solid #7e898b; padding-bottom: 2px; }
.count { position: absolute; left: 9px; top: 27px; width: 30px; height: 30px; border-radius: 50%; background: rgba(50,60,62,.85); border: 1px solid #8d9596; font-size: 17px; font-weight: 600; text-align: center; line-height: 27px; }
```
